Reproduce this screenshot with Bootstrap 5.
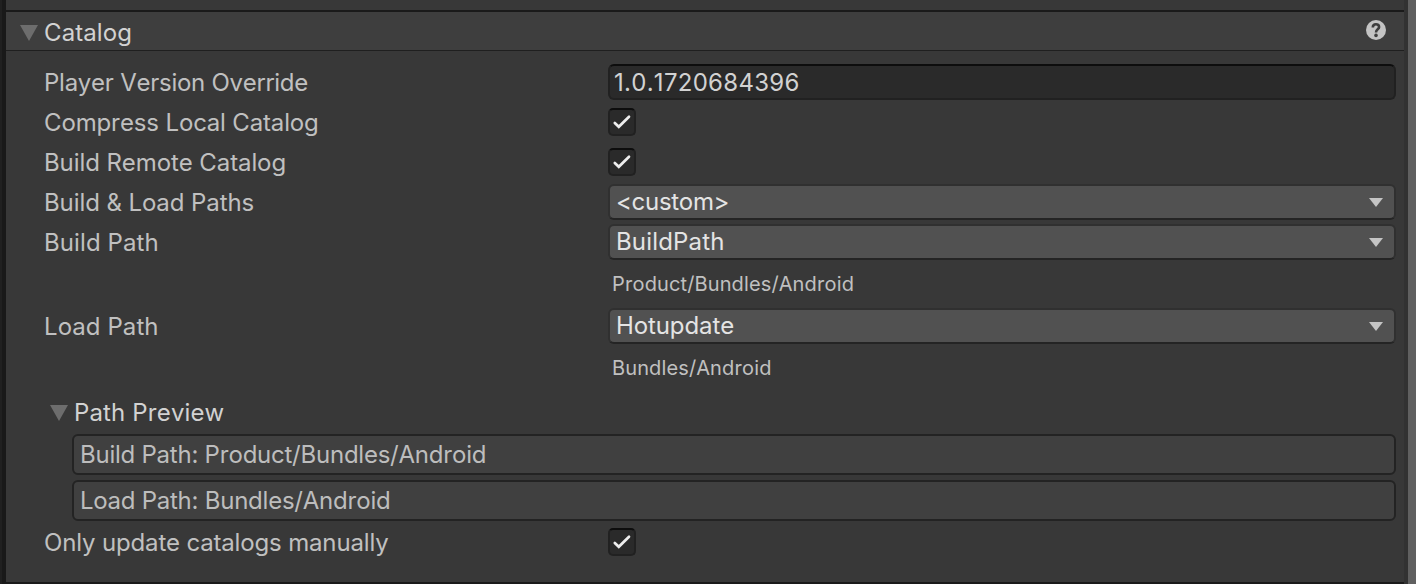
<!DOCTYPE html>
<html lang="en">
<head>
<meta charset="utf-8">
<title>Catalog settings</title>
<link rel="stylesheet" href="https://cdn.jsdelivr.net/npm/bootstrap@5.3.0/dist/css/bootstrap.min.css">
<style>
body{width:1416px;height:584px;overflow:hidden;background:#383838;color:#c0c0c0;font-family:Inter,"Liberation Sans",sans-serif;font-size:24px;font-weight:400;font-kerning:none;line-height:36px}
.edge-left{width:6px;background:#191919;border-left:2px solid #202020}
.edge-right{width:12px;background:#606060;border-left:4px solid #323232}
.strip{height:10px}
.section-head{height:41px;background:#3e3e3e;border-top:2px solid #1a1a1a;border-bottom:1px solid #1f1f1f;padding:0 18px 0 14px}
.section-head .arrow{margin-top:13px}
.section-head .title{margin-top:3px}
.title{margin-left:6px;color:#d2d2d2;letter-spacing:.12px}
.help-icon{margin-top:8px}
.panel-body{padding:13px 8px 0 38px;height:533px;border-bottom:2px solid #1a1a1a}
.prop{height:36px;margin-bottom:4px}
.prop-label{width:564px;padding-top:1px;letter-spacing:-.08px}
.field{height:36px;background:#2a2a2a;border:2px solid #212121;border-top-color:#0d0d0d;border-radius:6px;color:#d2d2d2;padding-left:4px;line-height:33px}
.tick{width:28px;height:28px;margin-top:4px;background:#2a2a2a;border:2px solid #212121;border-top-color:#0d0d0d;border-radius:5px}
.tick path{fill:none;stroke:#eee;stroke-width:2.7;stroke-linecap:round}
.picker{height:36px;background:#515151;border:2px solid #303030;border-bottom-color:#242424;border-radius:6px;color:#e4e4e4;padding:0 11px 0 6px}
.picker span{line-height:32px;height:32px;letter-spacing:-.1px}
.note{height:48px;margin-top:-4px;padding:4px 0 0 568px;font-size:20px;line-height:40px;letter-spacing:.12px}
.fold{height:42px;padding:0 0 0 6px}
.fold .arrow{margin-top:13px}
.fold .title{margin-top:3px}
.help-line{height:41px;margin:0 0 5px 28px;background:#404040;border:2px solid #232323;border-radius:6px;color:#bdbdbd;padding-left:6px;line-height:37px;letter-spacing:-.24px}
.last-row{margin-top:-2px}
.prop-label.tight{letter-spacing:-.25px}
.prop-label.snug{letter-spacing:-.14px}
.prop-label.loose{letter-spacing:.1px}
.picker .tight{letter-spacing:-.3px}
.picker .loose{letter-spacing:.17px}
.digits{letter-spacing:.28px}
svg{display:block;flex:none}
</style>
</head>
<body class="d-flex">
<div class="edge-left flex-shrink-0"></div>
<main class="flex-grow-1 d-flex flex-column">
  <div class="strip flex-shrink-0"></div>
  <header class="section-head d-flex flex-shrink-0 justify-content-between">
    <div class="d-flex">
      <svg class="arrow" width="18" height="16" viewBox="0 0 18 16"><path d="M0 0H18L9 16Z" fill="#6d6d6d"/></svg>
      <span class="title">Catalog</span>
    </div>
    <svg class="help-icon" width="20" height="20" viewBox="0 0 20 20"><circle cx="10" cy="10" r="10" fill="#c4c4c4"/><path d="M6.8 7.4C6.8 3.2 13.1 3.2 13.1 7C13.1 9.4 10 9.3 10 12.4" fill="none" stroke="#3e3e3e" stroke-width="2.6"/><circle cx="10" cy="15.4" r="1.8" fill="#3e3e3e"/></svg>
  </header>
  <section class="panel-body flex-shrink-0">
    <div class="prop d-flex"><div class="prop-label tight">Player Version Override</div><div class="field digits flex-grow-1">1.0.1720684396</div></div>
    <div class="prop d-flex"><div class="prop-label snug">Compress Local Catalog</div><div class="tick"><svg width="24" height="24" viewBox="0 0 24 24"><path d="M4.8 13L8.8 16.8L19 6.8"/></svg></div></div>
    <div class="prop d-flex"><div class="prop-label">Build Remote Catalog</div><div class="tick"><svg width="24" height="24" viewBox="0 0 24 24"><path d="M4.8 13L8.8 16.8L19 6.8"/></svg></div></div>
    <div class="prop d-flex"><div class="prop-label">Build &amp; Load Paths</div><div class="picker flex-grow-1 d-flex justify-content-between align-items-center"><span class="tight">&lt;custom&gt;</span><svg width="14" height="9" viewBox="0 0 14 9"><path d="M0 0H14L7 9Z" fill="#c4c4c4"/></svg></div></div>
    <div class="prop d-flex"><div class="prop-label loose">Build Path</div><div class="picker flex-grow-1 d-flex justify-content-between align-items-center"><span class="loose">BuildPath</span><svg width="14" height="9" viewBox="0 0 14 9"><path d="M0 0H14L7 9Z" fill="#c4c4c4"/></svg></div></div>
    <div class="note">Product/Bundles/Android</div>
    <div class="prop d-flex"><div class="prop-label loose">Load Path</div><div class="picker flex-grow-1 d-flex justify-content-between align-items-center"><span>Hotupdate</span><svg width="14" height="9" viewBox="0 0 14 9"><path d="M0 0H14L7 9Z" fill="#c4c4c4"/></svg></div></div>
    <div class="note">Bundles/Android</div>
    <div class="fold d-flex"><svg class="arrow" width="18" height="16" viewBox="0 0 18 16"><path d="M0 0H18L9 16Z" fill="#6d6d6d"/></svg><span class="title">Path Preview</span></div>
    <div class="help-line">Build Path: Product/Bundles/Android</div>
    <div class="help-line">Load Path: Bundles/Android</div>
    <div class="prop last-row d-flex"><div class="prop-label snug">Only update catalogs manually</div><div class="tick"><svg width="24" height="24" viewBox="0 0 24 24"><path d="M4.8 13L8.8 16.8L19 6.8"/></svg></div></div>
  </section>
</main>
<div class="edge-right flex-shrink-0"></div>
<script src="https://cdn.jsdelivr.net/npm/bootstrap@5.3.0/dist/js/bootstrap.bundle.min.js"></script>
</body>
</html>
